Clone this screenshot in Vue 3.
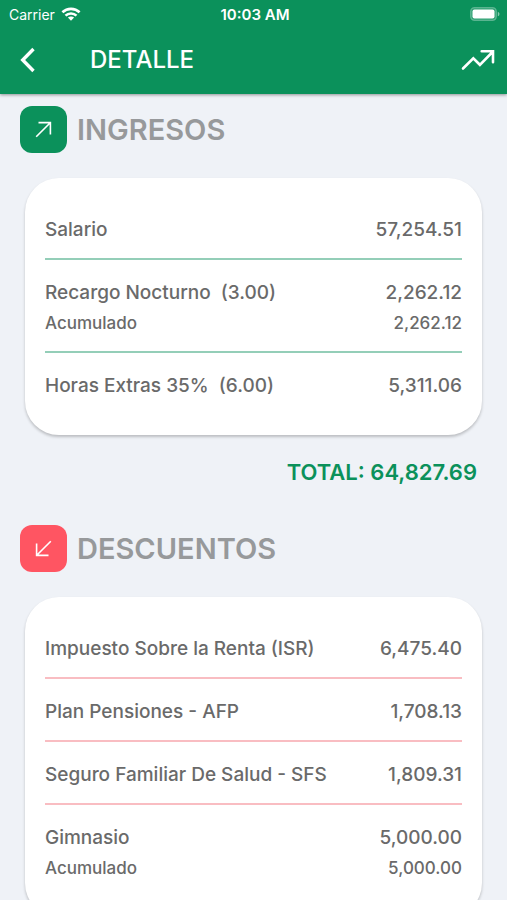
<script setup>
const sections = [
  {
    id: 'ingresos',
    title: 'INGRESOS',
    rows: [
      { label: 'Salario', amount: '57,254.51' },
      { label: 'Recargo Nocturno', qty: '(3.00)', amount: '2,262.12', accrued: '2,262.12' },
      { label: 'Horas Extras 35%', qty: '(6.00)', amount: '5,311.06' },
    ],
    total: '64,827.69',
  },
  {
    id: 'descuentos',
    title: 'DESCUENTOS',
    rows: [
      { label: 'Impuesto Sobre la Renta (ISR)', amount: '6,475.40' },
      { label: 'Plan Pensiones - AFP', amount: '1,708.13' },
      { label: 'Seguro Familiar De Salud - SFS', amount: '1,809.31' },
      { label: 'Gimnasio', amount: '5,000.00', accrued: '5,000.00' },
    ],
  },
]
</script>

<template>
  <div class="screen">
    <header class="top">
      <div class="status">
        <div class="carrier">
          <span>Carrier</span>
          <svg width="20" height="14" viewBox="0 0 20 14" fill="none" stroke="#fff" stroke-width="2.6">
            <path d="M1.4 5.3C6.2.7 13.8.7 18.6 5.3" />
            <path d="M4.5 8.6c3-2.9 8-2.9 11 0" />
            <path d="M10 13.7 6.9 10.6c1.7-1.5 4.5-1.5 6.2 0z" fill="#fff" stroke="none" />
          </svg>
        </div>
        <span class="time">10:03 AM</span>
        <svg class="battery" width="31" height="14" viewBox="0 0 31 14">
          <rect x=".7" y=".7" width="25.6" height="12.6" rx="3.8" fill="#fff" fill-opacity=".15" stroke="#fff" stroke-opacity=".3" stroke-width="1.3" />
          <rect x="2.5" y="2.5" width="22" height="9" rx="2" fill="#fff" />
          <path d="M27.8 4.7c2.2.9 2.2 3.7 0 4.6z" fill="#fff" fill-opacity=".5" />
        </svg>
      </div>
      <div class="bar">
        <button class="icon-btn" type="button" aria-label="Volver">
          <svg width="16" height="26" viewBox="0 0 16 26" fill="none" stroke="#fff" stroke-width="3.4">
            <path d="M13.5 2 2.7 13l10.8 11" />
          </svg>
        </button>
        <h1>DETALLE</h1>
        <button class="icon-btn" type="button" aria-label="Tendencia">
          <svg width="34" height="22" viewBox="0 0 34 22" fill="none" stroke="#fff" stroke-width="2.6" stroke-linecap="round">
            <path d="M2 19.5 12.3 9.3l6.6 6.5L31.5 3M20.7 2.3H32v11" />
          </svg>
        </button>
      </div>
    </header>

    <main class="content">
      <section v-for="s in sections" :key="s.id" :class="s.id">
        <div class="heading">
          <span class="badge">
            <svg width="17" height="17" viewBox="0 0 17 17" fill="none" stroke="#fff" stroke-width="1.6">
              <path v-if="s.id === 'ingresos'" d="M1.2 15.8 15 2M3.5 1.6h11.9v11.9" />
              <path v-else d="M15.8 1.2 2 15M1.6 3.5v11.9h11.9" />
            </svg>
          </span>
          <h2>{{ s.title }}</h2>
        </div>
        <ul class="card">
          <li v-for="r in s.rows" :key="r.label">
            <div class="line">
              <span>{{ r.label }}<template v-if="r.qty">&nbsp; {{ r.qty }}</template></span>
              <span>{{ r.amount }}</span>
            </div>
            <div v-if="r.accrued" class="line accrued">
              <span>Acumulado</span>
              <span>{{ r.accrued }}</span>
            </div>
          </li>
        </ul>
        <p v-if="s.total" class="total">TOTAL: {{ s.total }}</p>
      </section>
    </main>
  </div>
</template>

<style>
body {
  margin: 0;
  background: #eff2f7;
}
</style>

<style scoped>
.screen {
  height: 100vh;
  display: flex;
  flex-direction: column;
  background: #eff2f7;
  color: #6a6a6a;
  font-family: Inter, "Liberation Sans", sans-serif;
  font-weight: 500;
}
.top {
  position: relative;
  flex: none;
  background: #0b915b;
  color: #fff;
  box-shadow: 0 1px 3px rgba(0, 0, 0, 0.4);
}
.status {
  display: grid;
  grid-template-columns: 1fr auto 1fr;
  align-items: center;
  height: 28px;
  padding: 0 6px 0 9px;
  font-size: 14px;
}
.carrier {
  display: flex;
  align-items: center;
  gap: 6px;
  font-weight: 400;
}
.time {
  font-size: 15px;
  font-weight: 600;
}
.battery {
  justify-self: end;
}
.bar {
  display: flex;
  align-items: center;
  height: 66px;
  padding: 0 12px 2px 20px;
  box-sizing: border-box;
}
.icon-btn {
  display: flex;
  padding: 0;
  border: 0;
  background: none;
  cursor: pointer;
}
h1 {
  flex: 1;
  margin: 0 0 0 54px;
  font-size: 24px;
  line-height: 32px;
  font-weight: 500;
}
.content {
  flex: 1;
  min-height: 0;
  overflow-y: auto;
  scrollbar-width: none;
  padding: 12px 25px 24px;
}
.heading {
  display: flex;
  align-items: center;
  gap: 10px;
  margin: 0 -5px 25px;
}
.badge {
  display: grid;
  place-items: center;
  width: 47px;
  height: 47px;
  border-radius: 12px;
  background: #0b915b;
}
.descuentos .badge {
  background: #ff5562;
}
h2 {
  margin: 0;
  color: #97999b;
  font-size: 29px;
  line-height: 36px;
  font-weight: 600;
}
.card {
  margin: 0;
  padding: 19px 20px 21px;
  list-style: none;
  background: #fff;
  border-radius: 34px;
  box-shadow: 0 2px 3px rgba(0, 0, 0, 0.22);
}
.card li {
  padding: 21px 0 16px;
  font-size: 19px;
  line-height: 24px;
}
.card li + li {
  border-top: 2px solid #94ceb8;
}
.descuentos .card li + li {
  border-top-color: #f9bdc2;
}
.line {
  display: flex;
  justify-content: space-between;
}
.accrued {
  padding-top: 6px;
  font-size: 17px;
}
.total {
  margin: 22px 5px 38px;
  color: #0b915b;
  font-size: 22px;
  line-height: 30px;
  font-weight: 600;
  text-align: right;
}
</style>
